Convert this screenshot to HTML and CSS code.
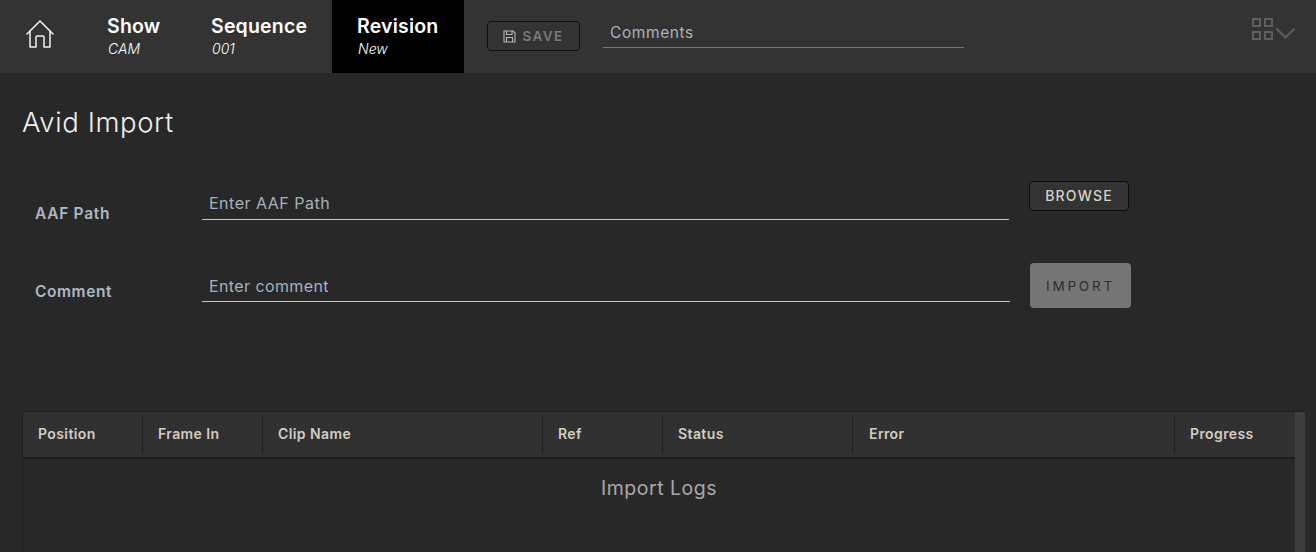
FILE: index.html
```html
<!DOCTYPE html>
<html lang="en">
<head>
<meta charset="utf-8">
<title>Avid Import</title>
<link rel="stylesheet" href="styles.css">
</head>
<body>
<header class="topbar">
  <a class="home" aria-label="Home">
    <svg width="28" height="28" viewBox="0 0 28 28" fill="none" stroke="#f2f2f2" stroke-width="1.5" stroke-linejoin="round" stroke-linecap="round">
      <path d="M1 14 14 1 27 14"/>
      <path d="M4 11V27H10V17a1 1 0 0 1 1-1h6a1 1 0 0 1 1 1V27H24V11"/>
    </svg>
  </a>
  <div class="crumb crumb-show"><b>Show</b><i>CAM</i></div>
  <div class="crumb crumb-seq"><b>Sequence</b><i>001</i></div>
  <div class="crumb crumb-rev"><b>Revision</b><i>New</i></div>
  <button class="save">
    <svg width="13" height="13" viewBox="0 0 13 13" fill="none" stroke="#b5b5b5" stroke-width="1.100">
      <path d="M1 1H10L12 3V12H1Z"/>
      <path d="M3.500 1V4.500H9V1"/>
      <path d="M3.500 12V7.500H9.500V12"/>
    </svg>
    SAVE
  </button>
  <div class="comments">Comments</div>
  <div class="layout-switch">
    <svg width="46" height="24" viewBox="0 0 46 24" fill="none" stroke="#5e5e5e" stroke-width="2">
      <rect x="1" y="1" width="7" height="7"/>
      <rect x="13" y="1" width="7" height="7"/>
      <rect x="1" y="14" width="7" height="7"/>
      <rect x="13" y="14" width="7" height="7"/>
      <path d="M24.500 10.500 33.500 19.500 42.500 10.500"/>
    </svg>
  </div>
</header>
<main class="page">
  <h1 class="title">Avid Import</h1>
  <section class="form">
    <div class="row row-path">
      <label class="label">AAF Path</label>
      <div class="field field-path">Enter AAF Path</div>
      <button class="browse">BROWSE</button>
    </div>
    <div class="row row-comment">
      <label class="label">Comment</label>
      <div class="field field-comment">Enter comment</div>
      <button class="import">IMPORT</button>
    </div>
  </section>
  <section class="grid">
    <div class="grid-main">
      <div class="grid-head">
        <div class="col col-1">Position</div>
        <div class="col col-2">Frame In</div>
        <div class="col col-3">Clip Name</div>
        <div class="col col-4">Ref</div>
        <div class="col col-5">Status</div>
        <div class="col col-6">Error</div>
        <div class="col col-7">Progress</div>
      </div>
      <div class="grid-body">Import Logs</div>
    </div>
    <div class="scrollbar"></div>
  </section>
</main>
</body>
</html>
```
FILE: styles.css
```css
* { box-sizing: border-box; }
html, body { margin: 0; height: 552px; overflow: hidden; }
body {
  background: #282828;
  font-family: "Inter", "Noto Sans", "Liberation Sans", sans-serif;
  color: #fff;
}
button { font-family: inherit; }

.topbar {
  height: 73px;
  background: #333333;
  display: flex;
  align-items: stretch;
}
.home { width: 107px; padding: 20px 0 0 26px; display: block; }
.crumb {
  display: flex;
  flex-direction: column;
  padding-top: 14px;
}
.crumb b { font-size: 19.500px; font-weight: 600; line-height: 24px; letter-spacing: 0.200px; }
.crumb i { font-size: 14px; font-weight: 300; line-height: 19px; padding: 1px 0 0 1px; }
.crumb-show { width: 104px; }
.crumb-seq { width: 121px; }
.crumb-rev { width: 132px; background: #000; padding-left: 25px; }

.save {
  width: 93px;
  height: 30px;
  margin: 21px 0 0 23px;
  background: transparent;
  border: 1px solid #111;
  border-radius: 4px;
  color: #7a7a7a;
  font-size: 13.500px;
  font-weight: 600;
  letter-spacing: 1.400px;
  display: flex;
  align-items: center;
  justify-content: center;
  gap: 6px;
  padding: 0;
}
.comments {
  width: 361px;
  height: 27px;
  margin: 21px 0 0 23px;
  padding: 1px 0 0 7px;
  border-bottom: 1px solid #6f7a7a;
  color: #a7b1bd;
  font-size: 15.500px;
  line-height: 22px;
  letter-spacing: 0.600px;
}
.layout-switch { margin: 18px 0 0 288px; }

.page { padding: 0 11px 0 22px; }
.title {
  margin: 0;
  padding-top: 32px;
  font-size: 27.500px;
  font-weight: 300;
  line-height: 34px;
  color: #f0f0f0;
  letter-spacing: 0.600px;
}

.form { margin-top: 43px; }
.row { display: flex; }
.label {
  width: 180px;
  padding-left: 13px;
  color: #aeb8c4;
  font-size: 15.500px;
  font-weight: 600;
  line-height: 20px;
}
.field {
  padding: 3px 0 0 7px;
  border-bottom: 1px solid #c9c9c9;
  color: #a7b1bd;
  font-size: 16px;
  line-height: 22px;
}
.row-path { height: 82px; }
.row-path .label { padding-top: 22px; letter-spacing: 0.700px; }
.row-path .field { width: 807px; height: 31px; margin-top: 7px; letter-spacing: 0.500px; }
.row-comment .label { padding-top: 18px; letter-spacing: 0.600px; }
.row-comment .field { width: 808px; height: 30px; margin-top: 8px; letter-spacing: 0.400px; }
.browse {
  width: 100px;
  height: 30px;
  margin: -1px 0 0 20px;
  background: #333;
  border: 1px solid #0d0d0d;
  border-radius: 4px;
  color: #d8d2c6;
  font-size: 14px;
  font-weight: 500;
  letter-spacing: 1.200px;
  padding: 0 0 2px;
}
.import {
  width: 101px;
  height: 45px;
  margin: -1px 0 0 20px;
  background: #757575;
  border: 0;
  border-radius: 4px;
  color: #2e2e2e;
  font-size: 13.500px;
  font-weight: 400;
  letter-spacing: 2.800px;
  padding: 0;
}

.grid {
  margin-top: 103px;
  height: 160px;
  display: flex;
  border-top: 1px solid #1c1c1c;
  border-left: 1px solid #1f1f1f;
}
.grid-main { flex: 1; min-width: 0; }
.scrollbar { width: 10px; background: #3e3e3e; }
.grid-head {
  height: 47px;
  background: #313131;
  border-bottom: 2px solid #1b1b1b;
  display: flex;
  padding-top: 4px;
}
.col {
  height: 38px;
  padding-left: 15px;
  color: #d3cdc2;
  font-size: 14px;
  font-weight: 600;
  line-height: 36px;
  letter-spacing: 0.400px;
  border-right: 1px solid #202020;
}
.col-1, .col-2 { width: 120px; }
.col-3 { width: 280px; }
.col-4 { width: 120px; }
.col-5 { width: 190px; }
.col-6 { width: 322px; padding-left: 16px; }
.col-7 { flex: 1; border-right: 0; }
.grid-body {
  text-align: center;
  color: #a8a8a8;
  font-size: 19.500px;
  font-weight: 400;
  line-height: 26px;
  letter-spacing: 0.500px;
  padding: 16px 0 0 0;
}
```
